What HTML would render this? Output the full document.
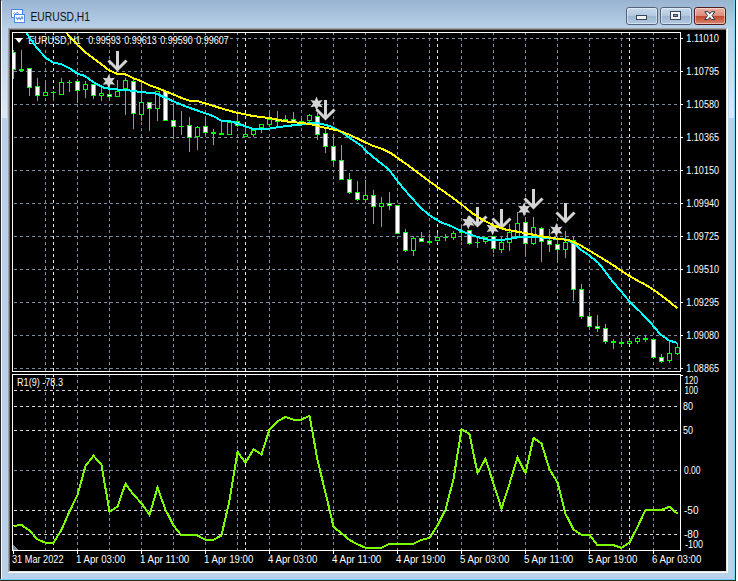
<!DOCTYPE html><html><head><meta charset="utf-8"><style>html,body{margin:0;padding:0;width:738px;height:581px;overflow:hidden;background:#fff}svg{display:block}text{font-family:"Liberation Sans",sans-serif}</style></head><body>
<svg width="738" height="581" viewBox="0 0 738 581">
<defs><linearGradient id="tb" x1="0" y1="0" x2="0" y2="1"><stop offset="0" stop-color="#99b4d1"/><stop offset="1" stop-color="#b8d0e9"/></linearGradient><linearGradient id="btn" x1="0" y1="0" x2="0" y2="1"><stop offset="0" stop-color="#c9dbee"/><stop offset="0.47" stop-color="#b3c9e1"/><stop offset="0.5" stop-color="#9cb4cf"/><stop offset="1" stop-color="#b4cbe3"/></linearGradient><linearGradient id="cls" x1="0" y1="0" x2="0" y2="1"><stop offset="0" stop-color="#eab2a6"/><stop offset="0.47" stop-color="#dd8e7c"/><stop offset="0.5" stop-color="#c24428"/><stop offset="1" stop-color="#d98a74"/></linearGradient><linearGradient id="sb" x1="0" y1="0" x2="0" y2="1"><stop offset="0" stop-color="#b9d1ea"/><stop offset="1" stop-color="#dce8f5"/></linearGradient><clipPath id="cm"><rect x="13" y="33" width="667" height="338"/></clipPath><clipPath id="cs"><rect x="13" y="375" width="667" height="175"/></clipPath></defs>
<rect x="0" y="0" width="738" height="581" fill="#b9d1ea"/>
<rect x="0" y="0" width="738" height="28" fill="url(#tb)"/>
<rect x="2" y="28" width="5" height="90" fill="url(#sb)"/><rect x="729" y="28" width="5" height="90" fill="url(#sb)"/>
<g shape-rendering="crispEdges">
<rect x="0" y="0" width="1" height="581" fill="#262626"/>
<rect x="1" y="1" width="1" height="580" fill="#f4f9ff"/>
<rect x="734" y="0" width="1" height="581" fill="#7fd6f2"/>
<rect x="735" y="0" width="1" height="581" fill="#2a2a2a"/>
<rect x="736" y="0" width="2" height="581" fill="#ffffff"/>
<rect x="0" y="579" width="735" height="1" fill="#6fd0ef"/>
<rect x="0" y="580" width="736" height="1" fill="#2a2a2a"/>
<rect x="8" y="28" width="720" height="545" fill="#ffffff"/>
<rect x="8" y="28" width="719" height="1" fill="#a0a0a0"/><rect x="8" y="28" width="1" height="544" fill="#a0a0a0"/>
<rect x="9" y="29" width="717" height="1" fill="#696969"/><rect x="9" y="29" width="1" height="542" fill="#696969"/>
<rect x="727" y="28" width="1" height="545" fill="#ffffff"/><rect x="8" y="572" width="720" height="1" fill="#ffffff"/>
<rect x="726" y="29" width="1" height="543" fill="#e3e3e3"/><rect x="9" y="571" width="718" height="1" fill="#e3e3e3"/>
<rect x="10" y="30" width="716" height="541" fill="#000000"/>
</g>
<g shape-rendering="crispEdges"><rect x="11.5" y="9.5" width="11" height="8" fill="#ffffff" stroke="#4f8be6" stroke-width="1"/><rect x="14.5" y="14.5" width="10" height="8" fill="#ffffff" stroke="#4f8be6" stroke-width="1"/><rect x="11" y="9" width="12" height="1" fill="#4a86d8"/></g><polyline points="13.5,13.5 14.5,12.5 15.5,13.5 17.5,12.5 18.5,14" fill="none" stroke="#4f8be6" stroke-width="1"/><polyline points="16,17 17.5,19.5 19,17.5 20.5,19.5 22,17 23,19" fill="none" stroke="#4f8be6" stroke-width="1.1"/>
<text x="30.5" y="21" font-size="12.6" fill="#101018" textLength="59.5" lengthAdjust="spacingAndGlyphs">EURUSD,H1</text>
<rect x="626.5" y="7.5" width="31" height="17" rx="2.5" ry="2.5" fill="url(#btn)" stroke="#56627a" stroke-width="1"/><rect x="627.5" y="8.5" width="29" height="15" rx="1.5" ry="1.5" fill="none" stroke="rgba(255,255,255,0.45)" stroke-width="1"/>
<rect x="660.5" y="7.5" width="31" height="17" rx="2.5" ry="2.5" fill="url(#btn)" stroke="#56627a" stroke-width="1"/><rect x="661.5" y="8.5" width="29" height="15" rx="1.5" ry="1.5" fill="none" stroke="rgba(255,255,255,0.45)" stroke-width="1"/>
<rect x="694.5" y="7.5" width="31" height="17" rx="2.5" ry="2.5" fill="url(#cls)" stroke="#4c1c1e" stroke-width="1"/><rect x="695.5" y="8.5" width="29" height="15" rx="1.5" ry="1.5" fill="none" stroke="rgba(255,255,255,0.45)" stroke-width="1"/>
<g shape-rendering="crispEdges"><rect x="636.5" y="15.5" width="10" height="4" fill="#f2f2f2" stroke="#3b4558" stroke-width="1"/><rect x="670.5" y="11.5" width="10" height="8" fill="#f2f2f2" stroke="#3b4558" stroke-width="1"/><rect x="673.5" y="14.5" width="4" height="2" fill="#7f93b0" stroke="#3b4558" stroke-width="1"/></g>
<polygon points="704.8,11.7 708.2,11.7 709.8,13.9 711.4,11.7 714.8,11.7 712.1,15.6 714.8,19.5 711.4,19.5 709.8,17.3 708.2,19.5 704.8,19.5 707.5,15.6" fill="#f6f6f6" stroke="#303845" stroke-width="1" stroke-linejoin="round"/>
<g shape-rendering="crispEdges">
<line x1="14" y1="38.5" x2="680" y2="38.5" stroke="#7b8ba0" stroke-width="1" stroke-dasharray="3 3"/>
<line x1="14" y1="71.5" x2="680" y2="71.5" stroke="#7b8ba0" stroke-width="1" stroke-dasharray="3 3"/>
<line x1="14" y1="104.5" x2="680" y2="104.5" stroke="#7b8ba0" stroke-width="1" stroke-dasharray="3 3"/>
<line x1="14" y1="137.5" x2="680" y2="137.5" stroke="#7b8ba0" stroke-width="1" stroke-dasharray="3 3"/>
<line x1="14" y1="170.5" x2="680" y2="170.5" stroke="#7b8ba0" stroke-width="1" stroke-dasharray="3 3"/>
<line x1="14" y1="203.5" x2="680" y2="203.5" stroke="#7b8ba0" stroke-width="1" stroke-dasharray="3 3"/>
<line x1="14" y1="236.5" x2="680" y2="236.5" stroke="#7b8ba0" stroke-width="1" stroke-dasharray="3 3"/>
<line x1="14" y1="269.5" x2="680" y2="269.5" stroke="#7b8ba0" stroke-width="1" stroke-dasharray="3 3"/>
<line x1="14" y1="302.5" x2="680" y2="302.5" stroke="#7b8ba0" stroke-width="1" stroke-dasharray="3 3"/>
<line x1="14" y1="335.5" x2="680" y2="335.5" stroke="#7b8ba0" stroke-width="1" stroke-dasharray="3 3"/>
<line x1="14" y1="368.5" x2="680" y2="368.5" stroke="#7b8ba0" stroke-width="1" stroke-dasharray="3 3"/>
<line x1="45.5" y1="32" x2="45.5" y2="371" stroke="#7b8ba0" stroke-width="1" stroke-dasharray="3 3"/>
<line x1="45.5" y1="374" x2="45.5" y2="550" stroke="#7b8ba0" stroke-width="1" stroke-dasharray="3 3"/>
<line x1="77.5" y1="32" x2="77.5" y2="371" stroke="#7b8ba0" stroke-width="1" stroke-dasharray="3 3"/>
<line x1="77.5" y1="374" x2="77.5" y2="550" stroke="#7b8ba0" stroke-width="1" stroke-dasharray="3 3"/>
<line x1="109.5" y1="32" x2="109.5" y2="371" stroke="#7b8ba0" stroke-width="1" stroke-dasharray="3 3"/>
<line x1="109.5" y1="374" x2="109.5" y2="550" stroke="#7b8ba0" stroke-width="1" stroke-dasharray="3 3"/>
<line x1="141.5" y1="32" x2="141.5" y2="371" stroke="#7b8ba0" stroke-width="1" stroke-dasharray="3 3"/>
<line x1="141.5" y1="374" x2="141.5" y2="550" stroke="#7b8ba0" stroke-width="1" stroke-dasharray="3 3"/>
<line x1="173.5" y1="32" x2="173.5" y2="371" stroke="#7b8ba0" stroke-width="1" stroke-dasharray="3 3"/>
<line x1="173.5" y1="374" x2="173.5" y2="550" stroke="#7b8ba0" stroke-width="1" stroke-dasharray="3 3"/>
<line x1="205.5" y1="32" x2="205.5" y2="371" stroke="#7b8ba0" stroke-width="1" stroke-dasharray="3 3"/>
<line x1="205.5" y1="374" x2="205.5" y2="550" stroke="#7b8ba0" stroke-width="1" stroke-dasharray="3 3"/>
<line x1="237.5" y1="32" x2="237.5" y2="371" stroke="#7b8ba0" stroke-width="1" stroke-dasharray="3 3"/>
<line x1="237.5" y1="374" x2="237.5" y2="550" stroke="#7b8ba0" stroke-width="1" stroke-dasharray="3 3"/>
<line x1="269.5" y1="32" x2="269.5" y2="371" stroke="#7b8ba0" stroke-width="1" stroke-dasharray="3 3"/>
<line x1="269.5" y1="374" x2="269.5" y2="550" stroke="#7b8ba0" stroke-width="1" stroke-dasharray="3 3"/>
<line x1="301.5" y1="32" x2="301.5" y2="371" stroke="#7b8ba0" stroke-width="1" stroke-dasharray="3 3"/>
<line x1="301.5" y1="374" x2="301.5" y2="550" stroke="#7b8ba0" stroke-width="1" stroke-dasharray="3 3"/>
<line x1="333.5" y1="32" x2="333.5" y2="371" stroke="#7b8ba0" stroke-width="1" stroke-dasharray="3 3"/>
<line x1="333.5" y1="374" x2="333.5" y2="550" stroke="#7b8ba0" stroke-width="1" stroke-dasharray="3 3"/>
<line x1="365.5" y1="32" x2="365.5" y2="371" stroke="#7b8ba0" stroke-width="1" stroke-dasharray="3 3"/>
<line x1="365.5" y1="374" x2="365.5" y2="550" stroke="#7b8ba0" stroke-width="1" stroke-dasharray="3 3"/>
<line x1="397.5" y1="32" x2="397.5" y2="371" stroke="#7b8ba0" stroke-width="1" stroke-dasharray="3 3"/>
<line x1="397.5" y1="374" x2="397.5" y2="550" stroke="#7b8ba0" stroke-width="1" stroke-dasharray="3 3"/>
<line x1="429.5" y1="32" x2="429.5" y2="371" stroke="#7b8ba0" stroke-width="1" stroke-dasharray="3 3"/>
<line x1="429.5" y1="374" x2="429.5" y2="550" stroke="#7b8ba0" stroke-width="1" stroke-dasharray="3 3"/>
<line x1="461.5" y1="32" x2="461.5" y2="371" stroke="#7b8ba0" stroke-width="1" stroke-dasharray="3 3"/>
<line x1="461.5" y1="374" x2="461.5" y2="550" stroke="#7b8ba0" stroke-width="1" stroke-dasharray="3 3"/>
<line x1="493.5" y1="32" x2="493.5" y2="371" stroke="#7b8ba0" stroke-width="1" stroke-dasharray="3 3"/>
<line x1="493.5" y1="374" x2="493.5" y2="550" stroke="#7b8ba0" stroke-width="1" stroke-dasharray="3 3"/>
<line x1="525.5" y1="32" x2="525.5" y2="371" stroke="#7b8ba0" stroke-width="1" stroke-dasharray="3 3"/>
<line x1="525.5" y1="374" x2="525.5" y2="550" stroke="#7b8ba0" stroke-width="1" stroke-dasharray="3 3"/>
<line x1="557.5" y1="32" x2="557.5" y2="371" stroke="#7b8ba0" stroke-width="1" stroke-dasharray="3 3"/>
<line x1="557.5" y1="374" x2="557.5" y2="550" stroke="#7b8ba0" stroke-width="1" stroke-dasharray="3 3"/>
<line x1="589.5" y1="32" x2="589.5" y2="371" stroke="#7b8ba0" stroke-width="1" stroke-dasharray="3 3"/>
<line x1="589.5" y1="374" x2="589.5" y2="550" stroke="#7b8ba0" stroke-width="1" stroke-dasharray="3 3"/>
<line x1="621.5" y1="32" x2="621.5" y2="371" stroke="#7b8ba0" stroke-width="1" stroke-dasharray="3 3"/>
<line x1="621.5" y1="374" x2="621.5" y2="550" stroke="#7b8ba0" stroke-width="1" stroke-dasharray="3 3"/>
<line x1="653.5" y1="32" x2="653.5" y2="371" stroke="#7b8ba0" stroke-width="1" stroke-dasharray="3 3"/>
<line x1="653.5" y1="374" x2="653.5" y2="550" stroke="#7b8ba0" stroke-width="1" stroke-dasharray="3 3"/>
<line x1="53.5" y1="32" x2="53.5" y2="371" stroke="#e8e8e8" stroke-width="1" stroke-dasharray="3 3"/>
<line x1="53.5" y1="374" x2="53.5" y2="550" stroke="#e8e8e8" stroke-width="1" stroke-dasharray="3 3"/>
<line x1="245.5" y1="32" x2="245.5" y2="371" stroke="#e8e8e8" stroke-width="1" stroke-dasharray="3 3"/>
<line x1="245.5" y1="374" x2="245.5" y2="550" stroke="#e8e8e8" stroke-width="1" stroke-dasharray="3 3"/>
<line x1="437.5" y1="32" x2="437.5" y2="371" stroke="#e8e8e8" stroke-width="1" stroke-dasharray="3 3"/>
<line x1="437.5" y1="374" x2="437.5" y2="550" stroke="#e8e8e8" stroke-width="1" stroke-dasharray="3 3"/>
<line x1="629.5" y1="32" x2="629.5" y2="371" stroke="#e8e8e8" stroke-width="1" stroke-dasharray="3 3"/>
<line x1="629.5" y1="374" x2="629.5" y2="550" stroke="#e8e8e8" stroke-width="1" stroke-dasharray="3 3"/>
<line x1="14" y1="390.5" x2="680" y2="390.5" stroke="#d8d8d8" stroke-width="1" stroke-dasharray="3 3"/>
<line x1="14" y1="406.5" x2="680" y2="406.5" stroke="#d8d8d8" stroke-width="1" stroke-dasharray="3 3"/>
<line x1="14" y1="430.5" x2="680" y2="430.5" stroke="#d8d8d8" stroke-width="1" stroke-dasharray="3 3"/>
<line x1="14" y1="470.5" x2="680" y2="470.5" stroke="#7b8ba0" stroke-width="1" stroke-dasharray="3 3"/>
<line x1="14" y1="510.5" x2="680" y2="510.5" stroke="#d8d8d8" stroke-width="1" stroke-dasharray="3 3"/>
<line x1="14" y1="534.5" x2="680" y2="534.5" stroke="#d8d8d8" stroke-width="1" stroke-dasharray="3 3"/>
<polygon points="13,545 13,550 19,550" fill="#7b8ba0"/>
</g>
<text x="28.3" y="44" font-size="10" fill="#ffffff"  textLength="52.5" lengthAdjust="spacingAndGlyphs">EURUSD,H1</text>
<text x="88.2" y="44" font-size="10" fill="#ffffff"  textLength="32.5" lengthAdjust="spacingAndGlyphs">0.99593</text>
<text x="124.2" y="44" font-size="10" fill="#ffffff"  textLength="32.5" lengthAdjust="spacingAndGlyphs">0.99613</text>
<text x="160.2" y="44" font-size="10" fill="#ffffff"  textLength="32.5" lengthAdjust="spacingAndGlyphs">0.99590</text>
<text x="196.2" y="44" font-size="10" fill="#ffffff"  textLength="32.5" lengthAdjust="spacingAndGlyphs">0.99607</text>
<polygon points="15,38 23,38 19,43" fill="#ffffff"/>
<g shape-rendering="crispEdges" clip-path="url(#cm)">
<rect x="13" y="50" width="1" height="29" fill="#00ff00"/>
<rect x="11" y="52" width="5" height="18" fill="#00ff00"/>
<rect x="12" y="53" width="3" height="16" fill="#ffffff"/>
<rect x="21" y="50" width="1" height="22" fill="#00ff00"/>
<rect x="19" y="69" width="5" height="2" fill="#00ff00"/>
<rect x="29" y="68" width="1" height="28" fill="#00ff00"/>
<rect x="27" y="68" width="5" height="20" fill="#00ff00"/>
<rect x="28" y="69" width="3" height="18" fill="#ffffff"/>
<rect x="37" y="78" width="1" height="23" fill="#00ff00"/>
<rect x="35" y="86" width="5" height="10" fill="#00ff00"/>
<rect x="36" y="87" width="3" height="8" fill="#ffffff"/>
<rect x="45" y="83" width="1" height="13" fill="#00ff00"/>
<rect x="43" y="92" width="5" height="4" fill="#00ff00"/>
<rect x="44" y="93" width="3" height="2" fill="#000000"/>
<rect x="53" y="91" width="1" height="10" fill="#00ff00"/>
<rect x="51" y="92" width="5" height="1" fill="#00ff00"/>
<rect x="61" y="78" width="1" height="17" fill="#00ff00"/>
<rect x="59" y="82" width="5" height="13" fill="#00ff00"/>
<rect x="60" y="83" width="3" height="11" fill="#000000"/>
<rect x="69" y="80" width="1" height="12" fill="#00ff00"/>
<rect x="67" y="82" width="5" height="1" fill="#00ff00"/>
<rect x="77" y="79" width="1" height="24" fill="#00ff00"/>
<rect x="75" y="81" width="5" height="10" fill="#00ff00"/>
<rect x="76" y="82" width="3" height="8" fill="#ffffff"/>
<rect x="85" y="81" width="1" height="17" fill="#00ff00"/>
<rect x="83" y="84" width="5" height="6" fill="#00ff00"/>
<rect x="84" y="85" width="3" height="4" fill="#000000"/>
<rect x="93" y="84" width="1" height="15" fill="#00ff00"/>
<rect x="91" y="84" width="5" height="12" fill="#00ff00"/>
<rect x="92" y="85" width="3" height="10" fill="#ffffff"/>
<rect x="101" y="88" width="1" height="13" fill="#00ff00"/>
<rect x="99" y="93" width="5" height="3" fill="#00ff00"/>
<rect x="100" y="94" width="3" height="1" fill="#000000"/>
<rect x="109" y="90" width="1" height="10" fill="#00ff00"/>
<rect x="107" y="94" width="5" height="3" fill="#00ff00"/>
<rect x="108" y="95" width="3" height="1" fill="#ffffff"/>
<rect x="117" y="80" width="1" height="17" fill="#00ff00"/>
<rect x="115" y="91" width="5" height="6" fill="#00ff00"/>
<rect x="116" y="92" width="3" height="4" fill="#000000"/>
<rect x="125" y="78" width="1" height="37" fill="#00ff00"/>
<rect x="123" y="80" width="5" height="9" fill="#00ff00"/>
<rect x="124" y="81" width="3" height="7" fill="#000000"/>
<rect x="133" y="79" width="1" height="50" fill="#00ff00"/>
<rect x="131" y="81" width="5" height="33" fill="#00ff00"/>
<rect x="132" y="82" width="3" height="31" fill="#ffffff"/>
<rect x="141" y="81" width="1" height="40" fill="#00ff00"/>
<rect x="139" y="102" width="5" height="13" fill="#00ff00"/>
<rect x="140" y="103" width="3" height="11" fill="#000000"/>
<rect x="149" y="102" width="1" height="29" fill="#00ff00"/>
<rect x="147" y="102" width="5" height="7" fill="#00ff00"/>
<rect x="148" y="103" width="3" height="5" fill="#ffffff"/>
<rect x="157" y="91" width="1" height="30" fill="#00ff00"/>
<rect x="155" y="91" width="5" height="18" fill="#00ff00"/>
<rect x="156" y="92" width="3" height="16" fill="#000000"/>
<rect x="165" y="91" width="1" height="30" fill="#00ff00"/>
<rect x="163" y="91" width="5" height="30" fill="#00ff00"/>
<rect x="164" y="92" width="3" height="28" fill="#ffffff"/>
<rect x="173" y="103" width="1" height="36" fill="#00ff00"/>
<rect x="171" y="120" width="5" height="7" fill="#00ff00"/>
<rect x="172" y="121" width="3" height="5" fill="#ffffff"/>
<rect x="181" y="111" width="1" height="24" fill="#00ff00"/>
<rect x="179" y="126" width="5" height="1" fill="#00ff00"/>
<rect x="189" y="117" width="1" height="35" fill="#00ff00"/>
<rect x="187" y="125" width="5" height="13" fill="#00ff00"/>
<rect x="188" y="126" width="3" height="11" fill="#ffffff"/>
<rect x="197" y="126" width="1" height="24" fill="#00ff00"/>
<rect x="195" y="127" width="5" height="10" fill="#00ff00"/>
<rect x="196" y="128" width="3" height="8" fill="#000000"/>
<rect x="205" y="118" width="1" height="17" fill="#00ff00"/>
<rect x="203" y="126" width="5" height="7" fill="#00ff00"/>
<rect x="204" y="127" width="3" height="5" fill="#ffffff"/>
<rect x="213" y="129" width="1" height="16" fill="#00ff00"/>
<rect x="211" y="132" width="5" height="2" fill="#00ff00"/>
<rect x="221" y="121" width="1" height="14" fill="#00ff00"/>
<rect x="219" y="133" width="5" height="2" fill="#00ff00"/>
<rect x="229" y="122" width="1" height="13" fill="#00ff00"/>
<rect x="227" y="122" width="5" height="13" fill="#00ff00"/>
<rect x="228" y="123" width="3" height="11" fill="#000000"/>
<rect x="237" y="114" width="1" height="13" fill="#00ff00"/>
<rect x="235" y="121" width="5" height="5" fill="#00ff00"/>
<rect x="236" y="122" width="3" height="3" fill="#ffffff"/>
<rect x="245" y="127" width="1" height="10" fill="#00ff00"/>
<rect x="243" y="134" width="5" height="3" fill="#00ff00"/>
<rect x="244" y="135" width="3" height="1" fill="#000000"/>
<rect x="253" y="130" width="1" height="7" fill="#00ff00"/>
<rect x="251" y="130" width="5" height="5" fill="#00ff00"/>
<rect x="252" y="131" width="3" height="3" fill="#000000"/>
<rect x="261" y="124" width="1" height="9" fill="#00ff00"/>
<rect x="259" y="124" width="5" height="4" fill="#00ff00"/>
<rect x="260" y="125" width="3" height="2" fill="#000000"/>
<rect x="269" y="112" width="1" height="15" fill="#00ff00"/>
<rect x="267" y="119" width="5" height="6" fill="#00ff00"/>
<rect x="268" y="120" width="3" height="4" fill="#000000"/>
<rect x="277" y="111" width="1" height="16" fill="#00ff00"/>
<rect x="275" y="119" width="5" height="3" fill="#00ff00"/>
<rect x="276" y="120" width="3" height="1" fill="#ffffff"/>
<rect x="285" y="115" width="1" height="7" fill="#00ff00"/>
<rect x="283" y="119" width="5" height="1" fill="#00ff00"/>
<rect x="293" y="112" width="1" height="10" fill="#00ff00"/>
<rect x="291" y="119" width="5" height="3" fill="#00ff00"/>
<rect x="292" y="120" width="3" height="1" fill="#ffffff"/>
<rect x="301" y="118" width="1" height="5" fill="#00ff00"/>
<rect x="299" y="121" width="5" height="1" fill="#00ff00"/>
<rect x="309" y="114" width="1" height="9" fill="#00ff00"/>
<rect x="307" y="115" width="5" height="6" fill="#00ff00"/>
<rect x="308" y="116" width="3" height="4" fill="#000000"/>
<rect x="317" y="113" width="1" height="27" fill="#00ff00"/>
<rect x="315" y="116" width="5" height="19" fill="#00ff00"/>
<rect x="316" y="117" width="3" height="17" fill="#ffffff"/>
<rect x="325" y="129" width="1" height="24" fill="#00ff00"/>
<rect x="323" y="133" width="5" height="14" fill="#00ff00"/>
<rect x="324" y="134" width="3" height="12" fill="#ffffff"/>
<rect x="333" y="134" width="1" height="33" fill="#00ff00"/>
<rect x="331" y="146" width="5" height="15" fill="#00ff00"/>
<rect x="332" y="147" width="3" height="13" fill="#ffffff"/>
<rect x="341" y="145" width="1" height="35" fill="#00ff00"/>
<rect x="339" y="160" width="5" height="20" fill="#00ff00"/>
<rect x="340" y="161" width="3" height="18" fill="#ffffff"/>
<rect x="349" y="173" width="1" height="21" fill="#00ff00"/>
<rect x="347" y="179" width="5" height="14" fill="#00ff00"/>
<rect x="348" y="180" width="3" height="12" fill="#ffffff"/>
<rect x="357" y="181" width="1" height="20" fill="#00ff00"/>
<rect x="355" y="192" width="5" height="8" fill="#00ff00"/>
<rect x="356" y="193" width="3" height="6" fill="#ffffff"/>
<rect x="365" y="180" width="1" height="21" fill="#00ff00"/>
<rect x="363" y="195" width="5" height="5" fill="#00ff00"/>
<rect x="364" y="196" width="3" height="3" fill="#000000"/>
<rect x="373" y="190" width="1" height="34" fill="#00ff00"/>
<rect x="371" y="195" width="5" height="12" fill="#00ff00"/>
<rect x="372" y="196" width="3" height="10" fill="#ffffff"/>
<rect x="381" y="197" width="1" height="30" fill="#00ff00"/>
<rect x="379" y="203" width="5" height="4" fill="#00ff00"/>
<rect x="380" y="204" width="3" height="2" fill="#000000"/>
<rect x="389" y="192" width="1" height="18" fill="#00ff00"/>
<rect x="387" y="203" width="5" height="3" fill="#00ff00"/>
<rect x="388" y="204" width="3" height="1" fill="#ffffff"/>
<rect x="397" y="205" width="1" height="29" fill="#00ff00"/>
<rect x="395" y="205" width="5" height="29" fill="#00ff00"/>
<rect x="396" y="206" width="3" height="27" fill="#ffffff"/>
<rect x="405" y="229" width="1" height="23" fill="#00ff00"/>
<rect x="403" y="232" width="5" height="19" fill="#00ff00"/>
<rect x="404" y="233" width="3" height="17" fill="#ffffff"/>
<rect x="413" y="236" width="1" height="20" fill="#00ff00"/>
<rect x="411" y="238" width="5" height="13" fill="#00ff00"/>
<rect x="412" y="239" width="3" height="11" fill="#000000"/>
<rect x="421" y="232" width="1" height="10" fill="#00ff00"/>
<rect x="419" y="238" width="5" height="4" fill="#00ff00"/>
<rect x="420" y="239" width="3" height="2" fill="#ffffff"/>
<rect x="429" y="234" width="1" height="9" fill="#00ff00"/>
<rect x="427" y="241" width="5" height="2" fill="#00ff00"/>
<rect x="437" y="233" width="1" height="8" fill="#00ff00"/>
<rect x="435" y="237" width="5" height="4" fill="#00ff00"/>
<rect x="436" y="238" width="3" height="2" fill="#000000"/>
<rect x="445" y="234" width="1" height="7" fill="#00ff00"/>
<rect x="443" y="237" width="5" height="1" fill="#00ff00"/>
<rect x="453" y="231" width="1" height="9" fill="#00ff00"/>
<rect x="451" y="233" width="5" height="5" fill="#00ff00"/>
<rect x="452" y="234" width="3" height="3" fill="#000000"/>
<rect x="461" y="225" width="1" height="16" fill="#00ff00"/>
<rect x="459" y="231" width="5" height="2" fill="#00ff00"/>
<rect x="469" y="230" width="1" height="15" fill="#00ff00"/>
<rect x="467" y="230" width="5" height="14" fill="#00ff00"/>
<rect x="468" y="231" width="3" height="12" fill="#ffffff"/>
<rect x="477" y="238" width="1" height="10" fill="#00ff00"/>
<rect x="475" y="242" width="5" height="1" fill="#00ff00"/>
<rect x="485" y="237" width="1" height="7" fill="#00ff00"/>
<rect x="483" y="237" width="5" height="5" fill="#00ff00"/>
<rect x="484" y="238" width="3" height="3" fill="#000000"/>
<rect x="493" y="236" width="1" height="17" fill="#00ff00"/>
<rect x="491" y="236" width="5" height="13" fill="#00ff00"/>
<rect x="492" y="237" width="3" height="11" fill="#ffffff"/>
<rect x="501" y="237" width="1" height="16" fill="#00ff00"/>
<rect x="499" y="242" width="5" height="8" fill="#00ff00"/>
<rect x="500" y="243" width="3" height="6" fill="#000000"/>
<rect x="509" y="224" width="1" height="27" fill="#00ff00"/>
<rect x="507" y="232" width="5" height="11" fill="#00ff00"/>
<rect x="508" y="233" width="3" height="9" fill="#000000"/>
<rect x="517" y="212" width="1" height="25" fill="#00ff00"/>
<rect x="515" y="223" width="5" height="14" fill="#00ff00"/>
<rect x="516" y="224" width="3" height="12" fill="#000000"/>
<rect x="525" y="217" width="1" height="37" fill="#00ff00"/>
<rect x="523" y="222" width="5" height="22" fill="#00ff00"/>
<rect x="524" y="223" width="3" height="20" fill="#ffffff"/>
<rect x="533" y="217" width="1" height="28" fill="#00ff00"/>
<rect x="531" y="227" width="5" height="17" fill="#00ff00"/>
<rect x="532" y="228" width="3" height="15" fill="#000000"/>
<rect x="541" y="227" width="1" height="35" fill="#00ff00"/>
<rect x="539" y="228" width="5" height="14" fill="#00ff00"/>
<rect x="540" y="229" width="3" height="12" fill="#ffffff"/>
<rect x="549" y="229" width="1" height="23" fill="#00ff00"/>
<rect x="547" y="240" width="5" height="5" fill="#00ff00"/>
<rect x="548" y="241" width="3" height="3" fill="#ffffff"/>
<rect x="557" y="240" width="1" height="23" fill="#00ff00"/>
<rect x="555" y="244" width="5" height="6" fill="#00ff00"/>
<rect x="556" y="245" width="3" height="4" fill="#ffffff"/>
<rect x="565" y="231" width="1" height="27" fill="#00ff00"/>
<rect x="563" y="242" width="5" height="8" fill="#00ff00"/>
<rect x="564" y="243" width="3" height="6" fill="#000000"/>
<rect x="573" y="236" width="1" height="65" fill="#00ff00"/>
<rect x="571" y="240" width="5" height="50" fill="#00ff00"/>
<rect x="572" y="241" width="3" height="48" fill="#ffffff"/>
<rect x="581" y="284" width="1" height="35" fill="#00ff00"/>
<rect x="579" y="289" width="5" height="28" fill="#00ff00"/>
<rect x="580" y="290" width="3" height="26" fill="#ffffff"/>
<rect x="589" y="312" width="1" height="18" fill="#00ff00"/>
<rect x="587" y="316" width="5" height="11" fill="#00ff00"/>
<rect x="588" y="317" width="3" height="9" fill="#ffffff"/>
<rect x="597" y="315" width="1" height="17" fill="#00ff00"/>
<rect x="595" y="326" width="5" height="3" fill="#00ff00"/>
<rect x="596" y="327" width="3" height="1" fill="#ffffff"/>
<rect x="605" y="324" width="1" height="20" fill="#00ff00"/>
<rect x="603" y="328" width="5" height="14" fill="#00ff00"/>
<rect x="604" y="329" width="3" height="12" fill="#ffffff"/>
<rect x="613" y="339" width="1" height="10" fill="#00ff00"/>
<rect x="611" y="341" width="5" height="2" fill="#00ff00"/>
<rect x="621" y="338" width="1" height="6" fill="#00ff00"/>
<rect x="619" y="342" width="5" height="2" fill="#00ff00"/>
<rect x="629" y="340" width="1" height="4" fill="#00ff00"/>
<rect x="627" y="341" width="5" height="3" fill="#00ff00"/>
<rect x="628" y="342" width="3" height="1" fill="#000000"/>
<rect x="637" y="336" width="1" height="8" fill="#00ff00"/>
<rect x="635" y="338" width="5" height="4" fill="#00ff00"/>
<rect x="636" y="339" width="3" height="2" fill="#000000"/>
<rect x="645" y="335" width="1" height="7" fill="#00ff00"/>
<rect x="643" y="338" width="5" height="2" fill="#00ff00"/>
<rect x="653" y="338" width="1" height="21" fill="#00ff00"/>
<rect x="651" y="339" width="5" height="19" fill="#00ff00"/>
<rect x="652" y="340" width="3" height="17" fill="#ffffff"/>
<rect x="661" y="354" width="1" height="9" fill="#00ff00"/>
<rect x="659" y="357" width="5" height="5" fill="#00ff00"/>
<rect x="660" y="358" width="3" height="3" fill="#ffffff"/>
<rect x="669" y="341" width="1" height="22" fill="#00ff00"/>
<rect x="667" y="353" width="5" height="8" fill="#00ff00"/>
<rect x="668" y="354" width="3" height="6" fill="#000000"/>
<rect x="677" y="343" width="1" height="12" fill="#00ff00"/>
<rect x="675" y="347" width="5" height="7" fill="#00ff00"/>
<rect x="676" y="348" width="3" height="5" fill="#000000"/>
</g>
<g clip-path="url(#cm)">
<polygon points="108.80,74.20 107.10,78.36 102.65,77.75 105.40,81.30 102.65,84.85 107.10,84.24 108.80,88.40 110.50,84.24 114.95,84.85 112.20,81.30 114.95,77.75 110.50,78.36" fill="#d4d4d4"/>
<polygon points="316.50,96.50 314.80,100.66 310.35,100.05 313.10,103.60 310.35,107.15 314.80,106.54 316.50,110.70 318.20,106.54 322.65,107.15 319.90,103.60 322.65,100.05 318.20,100.66" fill="#d4d4d4"/>
<polygon points="468.40,215.20 466.70,219.36 462.25,218.75 465.00,222.30 462.25,225.85 466.70,225.24 468.40,229.40 470.10,225.24 474.55,225.85 471.80,222.30 474.55,218.75 470.10,219.36" fill="#d4d4d4"/>
<polygon points="492.60,221.30 490.90,225.46 486.45,224.85 489.20,228.40 486.45,231.95 490.90,231.34 492.60,235.50 494.30,231.34 498.75,231.95 496.00,228.40 498.75,224.85 494.30,225.46" fill="#d4d4d4"/>
<polygon points="524.10,202.20 522.40,206.36 517.95,205.75 520.70,209.30 517.95,212.85 522.40,212.24 524.10,216.40 525.80,212.24 530.25,212.85 527.50,209.30 530.25,205.75 525.80,206.36" fill="#d4d4d4"/>
<polygon points="556.40,223.00 554.70,227.16 550.25,226.55 553.00,230.10 550.25,233.65 554.70,233.04 556.40,237.20 558.10,233.04 562.55,233.65 559.80,230.10 562.55,226.55 558.10,227.16" fill="#d4d4d4"/>
<rect x="116" y="51" width="3" height="17" fill="#d4d4d4"/>
<polyline points="108.5,60.5 117.5,69.5 126.5,60.5" fill="none" stroke="#d4d4d4" stroke-width="3" stroke-linejoin="miter"/>
<rect x="324" y="100" width="3" height="17" fill="#d4d4d4"/>
<polyline points="316.5,109.5 325.5,118.5 334.5,109.5" fill="none" stroke="#d4d4d4" stroke-width="3" stroke-linejoin="miter"/>
<rect x="476" y="207" width="3" height="17" fill="#d4d4d4"/>
<polyline points="468.5,216.5 477.5,225.5 486.5,216.5" fill="none" stroke="#d4d4d4" stroke-width="3" stroke-linejoin="miter"/>
<rect x="500" y="209" width="3" height="17" fill="#d4d4d4"/>
<polyline points="492.5,218.5 501.5,227.5 510.5,218.5" fill="none" stroke="#d4d4d4" stroke-width="3" stroke-linejoin="miter"/>
<rect x="532" y="189" width="3" height="17" fill="#d4d4d4"/>
<polyline points="524.5,198.5 533.5,207.5 542.5,198.5" fill="none" stroke="#d4d4d4" stroke-width="3" stroke-linejoin="miter"/>
<rect x="564" y="203" width="3" height="17" fill="#d4d4d4"/>
<polyline points="556.5,212.5 565.5,221.5 574.5,212.5" fill="none" stroke="#d4d4d4" stroke-width="3" stroke-linejoin="miter"/>
</g>
<polyline points="26.5,33.1 36.3,47.2 46.0,58.0 53.6,62.9 61.2,64.0 68.8,67.8 77.5,73.7 85.0,75.9 93.7,82.4 100.0,85.7 102.4,87.3 110.6,88.9 120.0,89.7 126.8,89.9 133.0,91.0 150.0,93.0 156.6,93.7 165.5,97.8 178.5,103.5 189.9,107.9 202.9,112.4 214.3,116.5 220.8,120.5 230.6,121.3 238.7,123.8 253.0,129.0 269.3,128.6 285.5,126.1 301.8,124.5 311.5,122.6 321.3,123.7 331.0,126.5 340.0,131.2 350.8,138.6 361.7,146.1 367.1,152.0 377.9,160.8 388.8,169.4 398.5,182.5 407.1,192.6 420.3,207.5 430.0,215.5 440.0,221.9 450.8,226.0 461.7,231.1 472.5,235.4 483.4,238.7 492.0,240.3 499.6,240.3 510.5,238.7 520.0,236.8 533.7,236.7 549.9,238.3 566.2,239.6 574.3,243.5 580.0,249.0 590.0,256.0 598.0,262.5 603.0,268.5 611.4,280.0 620.9,291.1 630.3,302.5 640.0,311.5 650.0,322.0 660.0,334.0 669.0,340.5 677.3,342.8" fill="none" stroke="#00ffff" stroke-width="2" shape-rendering="crispEdges" clip-path="url(#cm)"/>
<polyline points="66.6,33.1 77.5,45.0 87.2,53.7 95.0,59.4 100.0,63.2 109.0,70.2 117.0,73.8 125.2,74.3 133.0,78.0 142.8,81.8 150.0,85.4 157.4,88.0 170.4,93.2 181.8,98.1 189.9,100.7 198.0,101.3 211.0,105.1 224.0,109.2 237.0,112.7 253.0,116.0 269.3,118.0 285.5,121.3 301.8,123.0 309.9,123.9 318.0,126.1 334.3,129.7 340.0,131.0 350.8,135.3 361.7,140.7 372.5,145.6 383.4,149.4 391.0,153.2 398.5,158.6 407.2,164.6 420.0,174.3 429.8,181.6 440.0,188.8 450.8,196.4 461.7,204.5 472.5,213.4 483.4,220.2 494.2,225.7 505.0,229.4 515.9,231.4 525.5,233.1 541.8,236.4 558.0,238.8 569.4,240.2 580.0,245.0 590.0,251.0 602.0,258.2 614.1,265.7 626.1,274.0 640.0,282.0 643.6,283.5 655.0,290.8 666.3,299.1 677.3,308.2" fill="none" stroke="#ffff00" stroke-width="2" shape-rendering="crispEdges" clip-path="url(#cm)"/>
<polyline points="13.5,525.9 21.5,524.9 29.5,530.7 37.5,539.4 45.5,542.8 53.5,542.8 61.5,529.7 69.5,511.4 77.5,495.0 85.5,466.0 93.5,455.8 101.5,465.0 109.5,511.8 117.5,506.6 125.5,483.8 133.5,494.6 141.5,503.3 149.5,515.0 157.5,487.6 165.5,509.8 173.5,525.5 181.5,535.4 189.5,535.4 197.5,535.4 205.5,539.9 213.5,539.9 221.5,535.4 229.5,500.5 237.5,451.8 245.5,462.7 253.5,449.2 261.5,454.4 269.5,429.3 277.5,421.4 285.5,417.0 293.5,419.6 301.5,419.6 309.5,415.7 317.5,460.1 325.5,492.8 333.5,526.8 341.5,533.3 349.5,539.9 357.5,544.3 365.5,547.7 373.5,547.7 381.5,547.7 389.5,543.8 397.5,543.8 405.5,543.8 413.5,543.8 421.5,539.9 429.5,538.0 437.5,525.5 445.5,509.8 453.5,479.0 461.5,429.3 469.5,434.0 477.5,473.2 485.5,458.8 493.5,483.7 501.5,508.5 509.5,483.7 517.5,457.5 525.5,473.2 533.5,437.9 541.5,443.5 549.5,469.4 557.5,482.4 565.5,513.8 573.5,529.5 581.5,534.8 589.5,534.8 597.5,545.2 605.5,545.2 613.5,545.2 621.5,547.9 629.5,542.6 637.5,526.9 645.5,509.9 653.5,509.9 661.5,509.9 669.5,506.8 677.5,513.8" fill="none" stroke="#7cfc00" stroke-width="2" shape-rendering="crispEdges" clip-path="url(#cs)"/>
<g shape-rendering="crispEdges" fill="#ffffff">
<rect x="12" y="32" width="669" height="1"/><rect x="12" y="371" width="669" height="1"/>
<rect x="12" y="32" width="1" height="340"/><rect x="680" y="32" width="1" height="340"/>
<rect x="12" y="374" width="669" height="1"/><rect x="12" y="550" width="669" height="1"/>
<rect x="12" y="374" width="1" height="177"/><rect x="680" y="374" width="1" height="177"/>
<rect x="681" y="38" width="2" height="1"/>
<rect x="681" y="71" width="2" height="1"/>
<rect x="681" y="104" width="2" height="1"/>
<rect x="681" y="137" width="2" height="1"/>
<rect x="681" y="170" width="2" height="1"/>
<rect x="681" y="203" width="2" height="1"/>
<rect x="681" y="236" width="2" height="1"/>
<rect x="681" y="269" width="2" height="1"/>
<rect x="681" y="302" width="2" height="1"/>
<rect x="681" y="335" width="2" height="1"/>
<rect x="681" y="368" width="2" height="1"/>
<rect x="681" y="375" width="2" height="1"/>
<rect x="13" y="551" width="1" height="3"/>
<rect x="77" y="551" width="1" height="3"/>
<rect x="141" y="551" width="1" height="3"/>
<rect x="205" y="551" width="1" height="3"/>
<rect x="269" y="551" width="1" height="3"/>
<rect x="333" y="551" width="1" height="3"/>
<rect x="397" y="551" width="1" height="3"/>
<rect x="461" y="551" width="1" height="3"/>
<rect x="525" y="551" width="1" height="3"/>
<rect x="589" y="551" width="1" height="3"/>
<rect x="653" y="551" width="1" height="3"/>
</g>
<text x="686.3" y="42" font-size="10" fill="#ffffff"  textLength="32.7" lengthAdjust="spacingAndGlyphs">1.11010</text>
<text x="686.3" y="75" font-size="10" fill="#ffffff"  textLength="32.7" lengthAdjust="spacingAndGlyphs">1.10795</text>
<text x="686.3" y="108" font-size="10" fill="#ffffff"  textLength="32.7" lengthAdjust="spacingAndGlyphs">1.10580</text>
<text x="686.3" y="141" font-size="10" fill="#ffffff"  textLength="32.7" lengthAdjust="spacingAndGlyphs">1.10365</text>
<text x="686.3" y="174" font-size="10" fill="#ffffff"  textLength="32.7" lengthAdjust="spacingAndGlyphs">1.10150</text>
<text x="686.3" y="207" font-size="10" fill="#ffffff"  textLength="32.7" lengthAdjust="spacingAndGlyphs">1.09940</text>
<text x="686.3" y="240" font-size="10" fill="#ffffff"  textLength="32.7" lengthAdjust="spacingAndGlyphs">1.09725</text>
<text x="686.3" y="273" font-size="10" fill="#ffffff"  textLength="32.7" lengthAdjust="spacingAndGlyphs">1.09510</text>
<text x="686.3" y="306" font-size="10" fill="#ffffff"  textLength="32.7" lengthAdjust="spacingAndGlyphs">1.09295</text>
<text x="686.3" y="339" font-size="10" fill="#ffffff"  textLength="32.7" lengthAdjust="spacingAndGlyphs">1.09080</text>
<text x="686.3" y="372" font-size="10" fill="#ffffff"  textLength="32.7" lengthAdjust="spacingAndGlyphs">1.08865</text>
<text x="684.5" y="384.0" font-size="10" fill="#ffffff"  textLength="13.5" lengthAdjust="spacingAndGlyphs">120</text>
<text x="684.5" y="394.0" font-size="10" fill="#ffffff"  textLength="13.5" lengthAdjust="spacingAndGlyphs">100</text>
<text x="683" y="410.0" font-size="10" fill="#ffffff"  textLength="10" lengthAdjust="spacingAndGlyphs">80</text>
<text x="683" y="434.0" font-size="10" fill="#ffffff"  textLength="10" lengthAdjust="spacingAndGlyphs">50</text>
<text x="684" y="474.0" font-size="10" fill="#ffffff"  textLength="16.5" lengthAdjust="spacingAndGlyphs">0.00</text>
<text x="684" y="514.0" font-size="10" fill="#ffffff"  textLength="14.5" lengthAdjust="spacingAndGlyphs">-50</text>
<text x="684" y="538.0" font-size="10" fill="#ffffff"  textLength="14.5" lengthAdjust="spacingAndGlyphs">-80</text>
<text x="685" y="547.5" font-size="10" fill="#ffffff"  textLength="18" lengthAdjust="spacingAndGlyphs">-100</text>
<text x="12" y="563" font-size="10" fill="#ffffff"  textLength="51.5" lengthAdjust="spacingAndGlyphs">31 Mar 2022</text>
<text x="76" y="563" font-size="10" fill="#ffffff"  textLength="49.3" lengthAdjust="spacingAndGlyphs">1 Apr 03:00</text>
<text x="140" y="563" font-size="10" fill="#ffffff"  textLength="49.3" lengthAdjust="spacingAndGlyphs">1 Apr 11:00</text>
<text x="204" y="563" font-size="10" fill="#ffffff"  textLength="49.3" lengthAdjust="spacingAndGlyphs">1 Apr 19:00</text>
<text x="268" y="563" font-size="10" fill="#ffffff"  textLength="49.3" lengthAdjust="spacingAndGlyphs">4 Apr 03:00</text>
<text x="332" y="563" font-size="10" fill="#ffffff"  textLength="49.3" lengthAdjust="spacingAndGlyphs">4 Apr 11:00</text>
<text x="396" y="563" font-size="10" fill="#ffffff"  textLength="49.3" lengthAdjust="spacingAndGlyphs">4 Apr 19:00</text>
<text x="460" y="563" font-size="10" fill="#ffffff"  textLength="49.3" lengthAdjust="spacingAndGlyphs">5 Apr 03:00</text>
<text x="524" y="563" font-size="10" fill="#ffffff"  textLength="49.3" lengthAdjust="spacingAndGlyphs">5 Apr 11:00</text>
<text x="588" y="563" font-size="10" fill="#ffffff"  textLength="49.3" lengthAdjust="spacingAndGlyphs">5 Apr 19:00</text>
<text x="652" y="563" font-size="10" fill="#ffffff"  textLength="49.3" lengthAdjust="spacingAndGlyphs">6 Apr 03:00</text>
<text x="17" y="386" font-size="10" fill="#ffffff"  textLength="46" lengthAdjust="spacingAndGlyphs">R1(9) -78.3</text>
</svg></body></html>
